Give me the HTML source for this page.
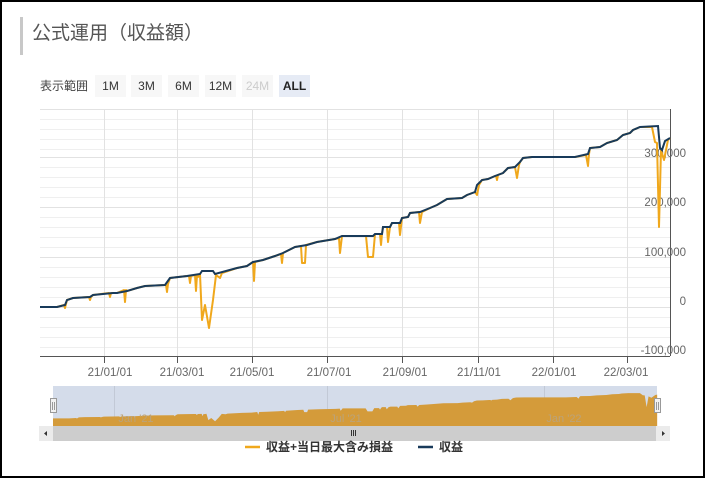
<!DOCTYPE html>
<html><head><meta charset="utf-8"><style>
html,body{margin:0;padding:0}
body{width:705px;height:478px;position:relative;background:#fff;overflow:hidden;font-family:"Liberation Sans","Noto Sans CJK JP",sans-serif}
.frame{position:absolute;left:0;top:0;width:701px;height:474px;border:2px solid #000}
.bar{position:absolute;left:20px;top:17px;width:3px;height:38px;background:#c8c8c8}
.title{position:absolute;left:32px;top:22px;font-size:19px;color:#555;line-height:24px}
.lbl{position:absolute;left:40px;top:78px;font-size:12px;color:#444;line-height:16px}
.btn{position:absolute;top:75px;height:22px;width:31px;background:#f7f7f7;font-size:12px;color:#333;text-align:center;line-height:22px}
svg{position:absolute;left:0;top:0}
</style></head><body>
<div class="frame"></div>
<div class="bar"></div>
<div class="title">公式運用（収益額）</div>
<div class="lbl">表示範囲</div>
<div class="btn" style="left:95px">1M</div>
<div class="btn" style="left:131px">3M</div>
<div class="btn" style="left:168px">6M</div>
<div class="btn" style="left:205px">12M</div>
<div class="btn" style="left:242px;color:#ccc">24M</div>
<div class="btn" style="left:279px;background:#e6ebf5;font-weight:bold;color:#222">ALL</div>
<svg width="705" height="478" xmlns="http://www.w3.org/2000/svg" font-family="Liberation Sans, sans-serif">
<g stroke="#efefef" stroke-width="1">
<path d="M40 119.5H670M40 129.5H670M40 139.5H670M40 149.5H670M40 167.5H670M40 177.5H670M40 187.5H670M40 197.5H670M40 217.5H670M40 227.5H670M40 237.5H670M40 247.5H670M40 267.5H670M40 277.5H670M40 287.5H670M40 297.5H670M40 317.5H670M40 327.5H670M40 337.5H670M40 347.5H670"/>
</g>
<g stroke="#e2e2e2" stroke-width="1">
<path d="M40 109.5H670M40 157.5H670M40 207.5H670M40 257.5H670M40 307.5H670"/>
<path d="M104.5 109V356M177.5 109V356M252.5 109V356M327.5 109V356M402.5 109V356M478.5 109V356M553.5 109V356M627.5 109V356"/>
</g>
<path d="M40 356.5H670M670.5 109V356" stroke="#555" stroke-width="1"/>
<path d="M104.5 356V363M177.5 356V363M252.5 356V363M327.5 356V363M402.5 356V363M478.5 356V363M553.5 356V363M627.5 356V363" stroke="#555"/>
<g font-size="11.5" fill="#666" text-anchor="middle">
<text x="110" y="376">21/01/01</text><text x="182" y="376">21/03/01</text><text x="252" y="376">21/05/01</text><text x="329" y="376">21/07/01</text><text x="405" y="376">21/09/01</text><text x="479" y="376">21/11/01</text><text x="554" y="376">22/01/01</text><text x="626" y="376">22/03/01</text>
</g>
<g font-size="11.5" fill="#666" text-anchor="end">
<text x="686" y="157">300,000</text><text x="686" y="206">200,000</text><text x="686" y="256">100,000</text><text x="686" y="305">0</text><text x="686" y="354">-100,000</text>
</g>
<polyline fill="none" stroke="#f0a81c" stroke-width="2" stroke-linejoin="round" points="40,307 57,307 64,305 65,308 66,304 67,300 73,298 89,297 90,300 91,297 93,295 109,293 110,297 111,293 117,293 124,290 125,302 126,290 127,291 137,288 145,286 165,285 166,285 167,292 168,284 170,278 187,276 189,276 190,283 191,276 195,275 196,291 197,275 198,277 200,274 202,320 205,305 209,328 213,300 216,275 220,278 222,273 237,268 247,266 253,262 254,281 255,262 263,260 275,256 281,254 282,263 283,253 295,247 301,246 302,263 305,263 306,245 317,242 335,239 339,238 340,253 342,236 366,236 368,257 373,257 375,234 380,234 381,245 382,234 383,227 387,227 388,242 390,227 392,223 399,223 400,235 402,218 408,217 410,213 419,212 420,223 422,212 430,208 437,205 447,199 462,198 467,195 475,192 477,195 479,185 482,180 488,179 495,176 496,176 497,180 498,175 503,173 508,168 515,167 517,178 519,165 520,162 523,158 532,157 575,157 586,155 588,166 589,154 590,148 600,147 607,143 617,140 623,135 630,133 633,130 640,127 652,127 655,142 657,143 659,227 661,150 664,160 668,140 670,138"/>
<polyline fill="none" stroke="#183a5a" stroke-width="2" points="40,307 57,307 65,305 67,300 73,298 90,297 93,295 113,293 117,293 127,291 137,288 145,286 165,285 170,278 187,276 200,274 202,271 213,271 215,274 237,268 247,266 253,262 263,260 275,256 283,253 295,247 307,245 317,242 335,239 342,236 373,236 375,234 382,234 383,227 390,227 392,223 400,223 402,218 408,217 410,213 420,212 430,208 437,205 447,199 462,198 467,195 475,192 477,185 482,180 488,179 495,176 503,173 508,168 515,167 520,162 523,158 532,157 575,157 588,154 590,148 600,147 607,143 617,140 623,135 630,133 633,130 640,127 658,126 660,148 662,150 665,141 670,138"/>
<rect x="53" y="386" width="604" height="40" fill="#d4dcea"/>
<path d="M114.5 386V426M327.5 386V426M544.5 386V426" stroke="#c2c9d6"/>
<polygon fill="#d49b3a" transform="matrix(0.959,0,0,0.14,14.64,375.36)" points="40,307 57,307 64,305 65,308 66,304 67,300 73,298 89,297 90,300 91,297 93,295 109,293 110,297 111,293 117,293 124,290 125,302 126,290 127,291 137,288 145,286 165,285 166,285 167,292 168,284 170,278 187,276 189,276 190,283 191,276 195,275 196,291 197,275 198,277 200,274 202,320 205,305 209,328 213,300 216,275 220,278 222,273 237,268 247,266 253,262 254,281 255,262 263,260 275,256 281,254 282,263 283,253 295,247 301,246 302,263 305,263 306,245 317,242 335,239 339,238 340,253 342,236 366,236 368,257 373,257 375,234 380,234 381,245 382,234 383,227 387,227 388,242 390,227 392,223 399,223 400,235 402,218 408,217 410,213 419,212 420,223 422,212 430,208 437,205 447,199 462,198 467,195 475,192 477,195 479,185 482,180 488,179 495,176 496,176 497,180 498,175 503,173 508,168 515,167 517,178 519,165 520,162 523,158 532,157 575,157 586,155 588,166 589,154 590,148 600,147 607,143 617,140 623,135 630,133 633,130 640,127 652,127 655,142 657,143 659,227 661,150 664,160 668,140 670,138 670,364 40,364"/>
<g font-size="11" fill="#bba37a" text-anchor="middle">
<text x="136" y="422">Jan '21</text><text x="346" y="422">Jul '21</text><text x="564" y="422">Jan '22</text>
</g>
<rect x="39" y="426" width="631" height="15" fill="#cdcdcd"/>
<rect x="39" y="426" width="14" height="15" fill="#ebebeb"/>
<rect x="656" y="426" width="14" height="15" fill="#ebebeb"/>
<path d="M47 431L44 433.5L47 436Z M662 431L665 433.5L662 436Z" fill="#333"/>
<path d="M351.5 430V436M353.5 430V436M355.5 430V436" stroke="#333"/>
<g fill="#f2f2f2" stroke="#999">
<rect x="50.5" y="398.5" width="6" height="14"/><rect x="654.5" y="398.5" width="6" height="14"/>
</g>
<path d="M52.5 402V410M54.5 402V410M656.5 402V410M658.5 402V410" stroke="#999"/>
<path d="M245 447H260" stroke="#f0a81c" stroke-width="2.5"/>
<path d="M418 447H433" stroke="#183a5a" stroke-width="2.5"/>
<g font-size="12" fill="#333" font-weight="bold" font-family="Liberation Sans, Noto Sans CJK JP, sans-serif">
<text x="266" y="451">収益+当日最大含み損益</text><text x="439" y="451">収益</text>
</g>
</svg>
</body></html>
